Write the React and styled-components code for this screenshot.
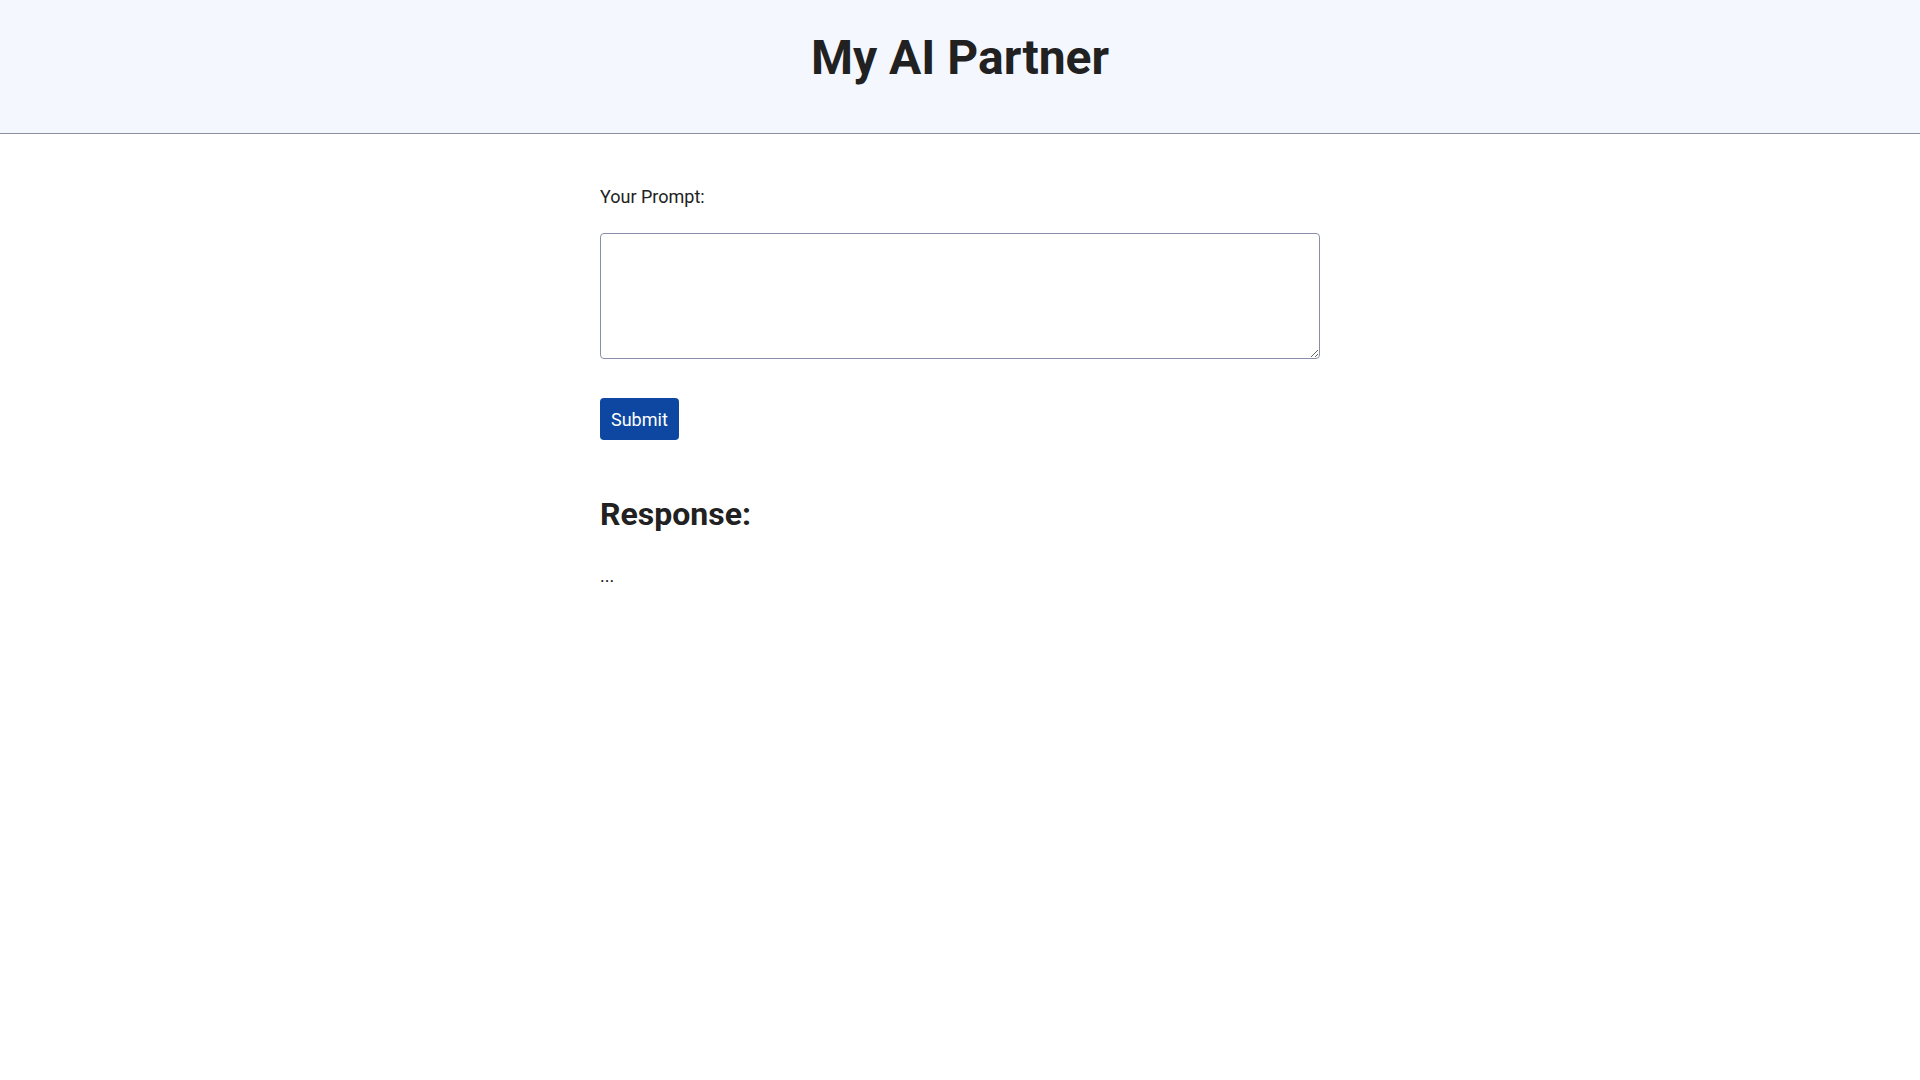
import React, { useState } from "react";
import styled, { createGlobalStyle } from "styled-components";

// global styles
const GlobalStyle = createGlobalStyle`
  html, body {
    margin: 0;
    padding: 0;
    background: #ffffff;
    color: #212121;
    font-family: Roboto, "Noto Sans", Arial, sans-serif;
    font-size: 18px;
  }
`;

const Header = styled.header`
  background-color: #f4f7fe;
  border-bottom: 1px solid #8a8fa5;
  padding: 29px 0 47px;
  text-align: center;
`;

const Title = styled.h1`
  margin: 0;
  font-size: 48px;
  font-weight: 700;
`;

const Main = styled.main`
  max-width: 720px;
  margin: 0 auto;
  padding-top: 52px;
`;

const Label = styled.label`
  display: block;
  font-size: 18px;
  margin-bottom: 26px;
`;

const PromptInput = styled.textarea`
  display: block;
  box-sizing: border-box;
  width: 100%;
  height: 126px;
  border: 1px solid #8a8fa8;
  border-radius: 4px;
  padding: 10px;
  font-family: inherit;
  font-size: 18px;
  color: #212121;
  background: #fff;
`;

const SubmitButton = styled.button`
  display: block;
  margin-top: 39px;
  height: 42px;
  padding: 0 11px;
  border: none;
  border-radius: 4px;
  background-color: #0d47a1;
  color: #ffffff;
  font-family: inherit;
  font-size: 18px;
  cursor: pointer;
`;

const ResponseTitle = styled.h2`
  margin: 55px 0 0;
  font-size: 32px;
  font-weight: 700;
`;

const ResponseText = styled.p`
  margin: 32px 0 0;
  font-size: 18px;
`;

const App = () => {
  const [prompt, setPrompt] = useState("");

  return (
    <>
      <GlobalStyle />
      {/* page header */}
      <Header>
        <Title>My AI Partner</Title>
      </Header>
      {/* prompt form and response */}
      <Main>
        <Label htmlFor="prompt">Your Prompt:</Label>
        <PromptInput
          id="prompt"
          value={prompt}
          onChange={e => setPrompt(e.target.value)}
        />
        <SubmitButton type="button">Submit</SubmitButton>
        <ResponseTitle>Response:</ResponseTitle>
        <ResponseText>...</ResponseText>
      </Main>
    </>
  );
};

export default App;
